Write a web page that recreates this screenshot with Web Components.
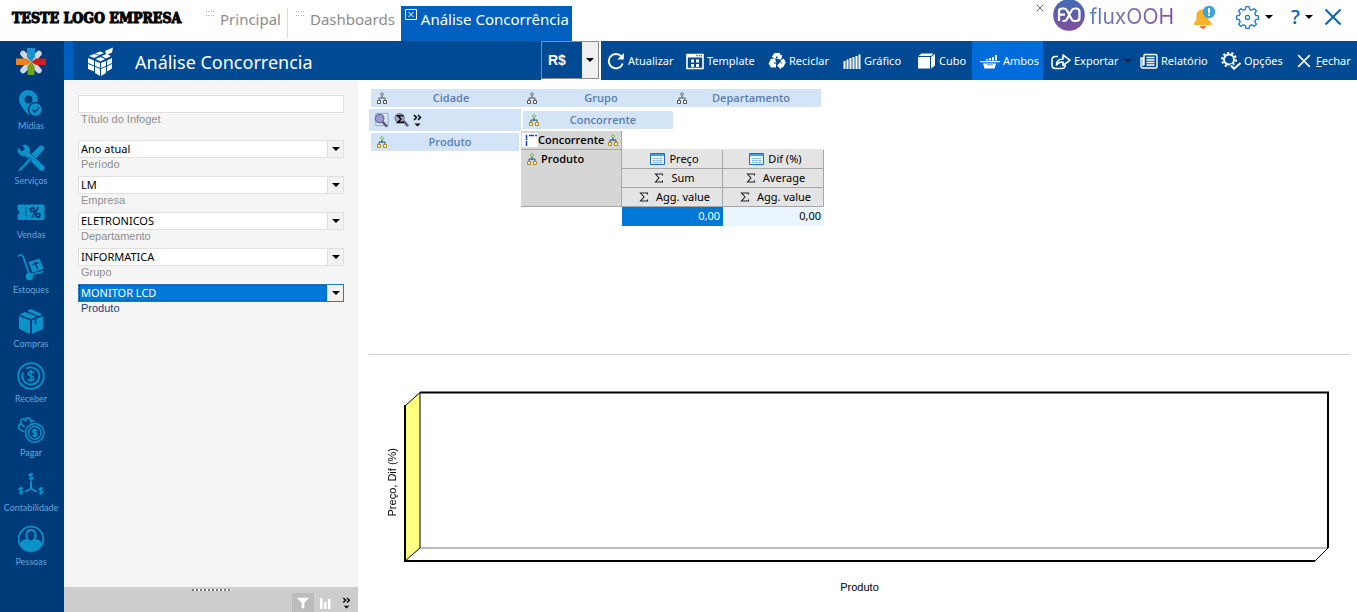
<!DOCTYPE html>
<html lang="pt-BR">
<head>
<meta charset="utf-8">
<title>Análise Concorrência</title>
<style>
html, body { margin: 0; height: 100%; }
body { font-family: "Noto Sans", "Open Sans", sans-serif; font-size: 11px; background: #fff; color: #000; }
</style>
</head>
<body>
<app-shell></app-shell>
<script>
const define = (name, html, setup) => {
  const template = document.createElement('template');
  template.innerHTML = html;
  customElements.define(name, class extends HTMLElement {
    connectedCallback() {
      if (this.shadowRoot) return;
      const root = this.attachShadow({ mode: 'open' });
      root.append(template.content.cloneNode(true));
      if (setup) setup(this, root);
    }
  });
};

const makeIcon = (name, className = '') => {
  const icon = document.createElement('ui-icon');
  icon.setAttribute('name', name);
  if (className) icon.className = className;
  return icon;
};

/* Icon set: [viewBox, markup]. Shapes use currentColor unless the icon is multicoloured. */
const ICONS = {
  grip: ['0 0 8 6', '<g fill="#b5b5b5"><path d="M0 0h1v1H0zM2 0h1v1H2zM5 0h1v1H5zM7 0h1v1H7zM0 4h1v1H0zM2 4h1v1H2zM5 4h1v1H5zM7 4h1v1H7z"/></g>'],
  tabclose: ['0 0 12 11', '<path d="M.5.5h11v10H.5z M3.5 3l5 5M8.500 3l-5 5" fill="none" stroke="currentColor"/>'],
  cross: ['0 0 18 18', '<path d="M1.500 1.500l15 15M16.500 1.500l-15 15" fill="none" stroke="currentColor" stroke-width="2"/>'],
  caret: ['0 0 8 4', '<path d="M0 0h8L4 4z" fill="currentColor"/>'],
  burst: ['0 0 30 30', '<g stroke="#cfd8e6" stroke-width="5.500" stroke-linecap="round"><path d="M15 15L7 6.500M15 15l8-8.500M15 15l-8 8.500M15 15l8 8.500"/></g><path d="M11 1h8v9l-4 5-4-5z" fill="#1c93d1"/><path d="M30 11.500v6.500h-10L15 15l5-3.500z" fill="#cc1f24"/><path d="M11.500 28h7v-9L15 15l-3.500 4z" fill="#6fa21a"/><path d="M0 11.500v6.500h11l4-3-4-3.500z" fill="#ee8421"/>'],
  cube: ['0 0 28 30', '<g fill="#fff"><path d="M1 11l6 2.500v5L1 16zM8 14l5 2v5l-5-2.300zM1 17l6 2.500v5L1 22zM8 19.700l5 2.300v7l-5-3z"/><path d="M25 11l-5 2.500v5l5-2.500zM19 14l-5 2v5l5-2.300zM25 17l-5 2.500v5l5-3zM19 19.700L14 22v7l5-3z"/><path d="M2 9l5-2 5 1.500-5 2.500zM8 6.500l5-2 4 1.500-4.500 2zM8.500 12l5-2 4.500 2-4.500 2.500zM14.500 9l5-2 4.500 2-5 2.500zM18 4l8-3.500-1 5L19.500 8z"/></g>'],
  refresh: ['0 0 18 18', '<path d="M15.800 11.500A7.200 7.200 0 1 1 14.500 4.500" fill="none" stroke="currentColor" stroke-width="1.900"/><path d="M16.800 1v6.500h-6.500z" fill="currentColor"/>'],
  template: ['0 0 18 18', '<path d="M1 2.500h16v14H1z" fill="none" stroke="currentColor" stroke-width="1.600"/><path d="M1 2h16v3.500H1z" fill="currentColor"/><path d="M10 3.200h1.500v1H10zM12.500 3.200H14v1h-1.500zM14.800 3.200H16v1h-1.200z" fill="#004a93"/><path d="M5 7.500h3v3H5zM10 7.500h3v3h-3zM5 12h3v3H5zM10 12h3v3h-3z" fill="currentColor"/>'],
  recycle: ['0 0 18 18', '<g fill="currentColor"><path d="M6.500 1h5L13 3.500l1.500-.8-1.500 5-4.800-1.200 1.600-.9L9 3.800 7.300 6.800 3.800 4.800z"/><path d="M2.500 7l4.500-.8 1.400 4.700-1.600-.9-1 1.500H8v4H3L.500 11.500l1.800-3z"/><path d="M12.500 8.500L15.800 6.500l2 4L15 15.500h-2.200V17.500L9 13.500l3.800-4v2H14z"/></g>'],
  bars: ['0 0 18 18', '<path d="M.5 9h2v8h-2zM3.500 7.500h2V17h-2zM6.500 6h2v11h-2zM9.500 5h2v12h-2zM12.500 4h2v13h-2zM15.500 2.500h2V17h-2z" fill="currentColor"/>'],
  box: ['0 0 18 18', '<path d="M0 5h12v11.500H0z M.5 4l3-2.500h12L13 4zM13 5l4-3v11.500L13 16.500z" fill="currentColor"/>'],
  both: ['0 0 20 18', '<path d="M0 9h20v1.200H0zM3 11.500h13L14.500 16.500h-10z M6 7h2v1.500H6zM9 6h2v2.500H9zM12 5h2v3.500h-2zM15 3h2v5.500h-2z" fill="currentColor"/><path d="M7 12.500h6v.8H7z" fill="#006bdb"/>'],
  share: ['0 0 20 18', '<path d="M7 4.500H4.500Q1 4.500 1 8v5q0 3.500 3.500 3.500H11q3 0 3.500-3.500M5.500 13Q5.500 7 12 7V3L19 8.200 12 13.500V10Q8 9.500 5.500 13z" fill="none" stroke="currentColor" stroke-width="1.600" stroke-linejoin="round"/>'],
  report: ['0 0 18 18', '<path d="M4 2.500h11.500q1.500 0 1.500 1.500v10.500q0 1.500-1.500 1.500H3Q1 16 1 14V6h2v8M4 2.500V13" fill="none" stroke="currentColor" stroke-width="1.400"/><path d="M6.500 5.500h8M6.500 8h8M6.500 10.500h8M6.500 13h8" stroke="currentColor" stroke-width="1.300"/>'],
  options: ['0 0 20 18', '<circle cx="8" cy="7.500" r="5" fill="none" stroke="currentColor" stroke-width="1.900"/><circle cx="8" cy="7.500" r="6.900" fill="none" stroke="currentColor" stroke-width="2.200" stroke-dasharray="2.200 2.135"/><path d="M9 13l3.500 3.500L19 10" fill="none" stroke="#004a93" stroke-width="4.500"/><path d="M10 13.500l3 3.200L19.500 11" fill="none" stroke="currentColor" stroke-width="2"/>'],
  fx: ['0 0 32 32', '<defs><linearGradient id="g" x1="0" x2="0" y1="0" y2="1"><stop offset="0" stop-color="#3f6cb4"/><stop offset="1" stop-color="#814e9f"/></linearGradient></defs><circle cx="16" cy="16" r="15.800" fill="url(#g)"/><g fill="none" stroke="#fff" stroke-width="2.200"><path d="M6 22V12.500q0-3 3-3h2q2 0 3 2l4.500 8.500q1 2 3 2H23q3.500 0 3.500-3.500V13q0-3.500-3.500-3.500h-1.500q-2 0-3 2L14 20q-1 2-3 2H9.500M6 15.700h6"/></g>'],
  bell: ['0 0 24 24', '<path d="M2 18.500l2.500-4V9Q6 4.500 10.500 4.500 16 5 16.500 10v4.500l3 4v1.500H2z" fill="#f6b22b"/><path d="M8 21h6q-.5 2.800-3 2.800T8 21z" fill="#e8722e"/><circle cx="17" cy="7" r="6.200" fill="#3da2de"/><path d="M16 3h2v5.200h-2zM16 9.200h2v1.900h-2z" fill="#fff"/>'],
  gear: ['0 0 24 24', '<path d="M10.500 1.500h3l.6 2.700 1.900.8 2.400-1.500 2.100 2.100L19 8l.8 1.900 2.700.6v3l-2.700.6L19 16l1.500 2.400-2.100 2.100L16 19l-1.900.8-.6 2.700h-3l-.6-2.700L8 19l-2.400 1.500-2.100-2.100L5 16l-.8-1.900-2.700-.6v-3l2.700-.6L5 8 3.500 5.600l2.100-2.100L8 5l1.900-.8z" fill="none" stroke="#1d78c8" stroke-width="1.300" stroke-linejoin="round"/><circle cx="12" cy="12" r="2" fill="none" stroke="#1d78c8" stroke-width="1.200"/>'],
  pin: ['0 0 28 28', '<path d="M11 1a9.500 9.500 0 0 1 9.700 9.500q0 2-1 4.200L11.500 26Q2 16 2 10.500A9 9 0 0 1 11 1z" fill="currentColor"/><circle cx="11.500" cy="10.500" r="4" fill="#003b79"/><circle cx="18.500" cy="20.500" r="7" fill="currentColor" stroke="#003b79" stroke-width="1.500"/><path d="M15.500 20.500l2.500 2.500 4-4.500" fill="none" stroke="#003b79" stroke-width="1.600"/>'],
  tools: ['0 0 28 28', '<g fill="currentColor"><path d="M1 4l4 3.500L8 5 5.500 1q5-1 7 3 .8 2-.2 4.500L27 22q1.500 2-.3 4t-4 0L9 12q-4 1-6.500-1.500T1 4z"/><path d="M26 1.500q2.500 1.500 1.500 4L19 15l-5-5 8.500-8.500q2-1.200 3.500 0z" stroke="#003b79"/><path d="M12.500 13.500l2.500 2L6 24.500l-.5 1.500-3.500 1.500-.8-.8L3 23l1.500-.5z" stroke="#003b79" stroke-width=".6"/></g>'],
  ticket: ['0 0 30 28', '<path d="M2 6h26q1.500 0 1.500 1.500V21q0 1.500-1.500 1.500H2Q.5 22.500.5 21v-4q2-.5 2-2.700T.500 11.500v-4Q.5 6 2 6z" fill="currentColor"/><path d="M9.500 9v11" stroke="#003b79" stroke-width="1.500" stroke-dasharray="2 1.500"/><g fill="none" stroke="#003b79" stroke-width="2"><circle cx="16.500" cy="11.500" r="2"/><circle cx="22.500" cy="17.500" r="2"/><path d="M23 9l-7 11"/></g>'],
  dolly: ['0 0 28 28', '<path d="M1 3.500Q4 .5 6 3.500l6.500 18.500L26.500 18.500" fill="none" stroke="currentColor" stroke-width="1.700"/><circle cx="12.500" cy="23.500" r="3.700" fill="currentColor"/><path d="M11.500 9L22.500 5.500l4 10.500-11 3.500z" fill="currentColor"/><path d="M20.500 16l-2-5.500M15.800 12.500l2.500-3 3.500 1" fill="none" stroke="#003b79" stroke-width="1.500"/>'],
  parcel: ['0 0 28 28', '<g fill="currentColor"><path d="M2 9l11 4.500V27L2 22zM26 9l-11 4.500V27l11-5z"/><path d="M2.500 7.500L8 5l11.500 4.500L14 12zM10 4l4-2 11.500 5.500L21.500 9z"/></g><path d="M18.500 12v5.500" stroke="#003b79" stroke-width="1.500"/>'],
  coin: ['0 0 28 28', '<g fill="none" stroke="currentColor"><circle cx="14" cy="14" r="12.800" stroke-width="1.800"/><path d="M9.500 6.700a8.500 8.500 0 1 1-3.500 4" stroke-width="1.800"/><path d="M17 11q-1-1.500-3-1.500-2.800 0-2.800 2.200 0 1.800 2.800 2.300t2.800 2.300q0 2.200-2.800 2.200-2.200 0-3.200-1.500M14 8v12" stroke-width="1.500"/></g>'],
  pay: ['0 0 30 28', '<g fill="none" stroke="currentColor" stroke-width="1.600"><circle cx="19" cy="17" r="10"/><circle cx="19" cy="17" r="6.800"/><path d="M21.500 14.700q-1-1-2.500-1-2.200 0-2.200 1.600 0 1.300 2.200 1.700t2.200 1.700q0 1.600-2.200 1.600-1.600 0-2.600-1M19 12.300v9.500"/><path d="M8 16Q1 13.500 1.500 10 2 7 5 8q-2.500-4 0-5.500t4.500 2Q8.500 1 11.500 1T15 5q2-2 3.500 0M5 8l3 3"/></g>'],
  ledger: ['0 0 28 28', '<g fill="none" stroke="currentColor" stroke-width="1.500"><path d="M14 10.500v7l-6 3.500M14 17.500l6 3.500" stroke-width="2"/><g id="d"><path d="M16 3.800q-.8-.9-2-.9-1.900 0-1.900 1.300 0 1 1.900 1.300t1.900 1.400q0 1.300-1.900 1.300-1.300 0-2.100-.9M14 2v8"/></g><use href="#d" x="-10" y="14"/><use href="#d" x="10" y="14"/></g>'],
  person: ['0 0 28 28', '<circle cx="14" cy="14" r="12.300" fill="none" stroke="currentColor" stroke-width="1.700"/><path d="M2.500 19Q5 14.500 9.500 14q-1.500-2-1-5Q9.500 4 14 4t5.500 5q.5 3-1 5 4.500.5 7 5-3.500 7-11.500 7T2.500 19z" fill="currentColor"/><path d="M10.500 8.500q0 7 3.500 7t3.500-7Q16 6 14 6t-3.500 2.500z" fill="#003b79"/>'],
  tree: ['0 0 10 12', '<path d="M5 3v3M2 8V6h6v2" fill="none" stroke="#555"/><path d="M5 .5L6.500 2 5 3.500 3.500 2zM.5 8.500h3v3h-3zM6.500 8.500h3v3h-3z" fill="#fff" stroke="#555"/>'],
  treecolor: ['0 0 10 12', '<path d="M5 4v3M2 8V6h6v2" fill="none" stroke="#23507c"/><path d="M5 .5L6.700 2.200 5 3.900 3.300 2.200z" fill="#d6f5cc" stroke="#4fb03d"/><path d="M.5 8.500h3v3h-3zM6.500 8.500h3v3h-3z" fill="#fff3b0" stroke="#b08b1c"/>'],
  find: ['0 0 18 16', '<path d="M3 1h13v13H3z" fill="#e8eefa" stroke="#8fa3c9"/><path d="M3 4h13M3 7h13M3 10h13M7 1v13M11 1v13" stroke="#b6c3de" stroke-width=".6"/><circle cx="7" cy="6.500" r="4.500" fill="#9a9bd0" stroke="#6a6795" stroke-width="1.300"/><path d="M10 10l5 5" stroke="#5c5a86" stroke-width="2.800"/>'],
  findsum: ['0 0 18 16', '<circle cx="7" cy="6" r="4.800" fill="#a9abc8" stroke="#77759b" stroke-width="1.300"/><path d="M11 9l5 5.500" stroke="#66648b" stroke-width="3"/><path d="M11 3.500H5l3.500 3.500L5 10.500h6.500" fill="none" stroke="#111" stroke-width="1.700"/>'],
  more: ['0 0 10 13', '<path d="M1 1l2.500 2.500L1 6M5 1l2.500 2.500L5 6" fill="none" stroke="#000" stroke-width="1.500"/><path d="M1.500 9.500h6L4.500 12.500z" fill="#000"/>'],
  pivotmark: ['0 0 16 14', '<path d="M0 0h16v14H0z" fill="#fff"/><path d="M4.500 13V2.500H6M7 2.500h8" fill="none" stroke="#1440c8" stroke-width="1.500" stroke-dasharray="5 1"/>'],
  sheet: ['0 0 15 12', '<path d="M.5.5h14v11H.5z" fill="#eaf4ff" stroke="#2569b7"/><path d="M1 1h13v2H1z" fill="#4c9be8"/><path d="M3 5.500h9M3 7.500h9M3 9.500h9" stroke="#7ab4ee" stroke-dasharray="2.500 .8"/>'],
  sigma: ['0 0 10 10', '<path d="M8.500 2.500V1H1.500L5 5 1.500 9h7V7.500" fill="none" stroke="#222" stroke-width="1.100"/>'],
  funnel: ['0 0 16 12', '<path d="M1 0h14L9.500 6v6h-3V6z" fill="#fff"/>'],
  minibars: ['0 0 12 12', '<path d="M1 1h2.500v11H1zM5 5h2.500v7H5zM9 2h2.500v10H9z" fill="#fff"/>']
};

customElements.define('ui-icon', class extends HTMLElement {
  connectedCallback() {
    if (this.shadowRoot) return;
    const [box, body] = ICONS[this.getAttribute('name')];
    this.attachShadow({ mode: 'open' }).innerHTML =
      `<style>:host{display:inline-block;flex:none;width:18px;height:18px}svg{display:block;width:100%;height:100%}</style>
       <svg viewBox="${box}" aria-hidden="true">${body}</svg>`;
  }
});

define('top-tab', `
<style>
:host { display: block; margin-top: 8px; height: 30px; }
:host([divided]) { border-left: 1px solid #dcdcdc; }
:host([active]) { margin-top: 6px; height: 35px; background: #0060bf; }
button { all: unset; box-sizing: border-box; display: flex; gap: 6px; height: 100%; padding: 0 6px 0 8px; color: #8c8c8c; font-size: 15px; line-height: 22px; cursor: pointer; white-space: nowrap; }
:host([active]) button { color: #fff; padding: 2px 3px 2px 4px; gap: 4px; }
ui-icon { width: 8px; height: 6px; margin-top: 3px; }
:host([active]) ui-icon { width: 12px; height: 11px; margin-top: 1px; }
</style>
<button type="button"><slot></slot></button>`,
(host, root) => root.querySelector('button').prepend(makeIcon(host.hasAttribute('active') ? 'tabclose' : 'grip')));

define('top-bar', `
<style>
:host { display: flex; height: 41px; background: #fff; }
.logo { width: 198px; box-sizing: border-box; padding-left: 12px; font: bold 14px/37px "DejaVu Serif Condensed", "DejaVu Serif", serif; font-stretch: condensed; -webkit-text-stroke: 1px #000; white-space: nowrap; }
nav { display: flex; flex: 1; }
.end { display: flex; align-items: center; height: 34px; padding-right: 15px; }
button { all: unset; display: flex; align-items: center; gap: 5px; cursor: pointer; color: #0a62b8; }
.tiny { align-self: flex-start; margin: 4px 9px 0 0; color: #555; }
.tiny ui-icon { width: 8px; height: 8px; }
.fx { width: 32px; height: 32px; margin: 0 5px 4px 0; }
.brand { font: 400 21px/30px Inter, sans-serif; background: linear-gradient(90deg, #5a7dbd, #7a68ae 50%, #8a4f9f); -webkit-background-clip: text; background-clip: text; color: transparent; margin-right: 18px; }
.bell { width: 24px; height: 24px; margin-right: 19px; }
.gear { width: 25px; height: 25px; }
.caret { width: 8px; height: 4px; color: #000; }
.help { font-size: 20px; line-height: 28px; font-weight: 500; margin: 0 11px 0 18px; }
</style>
<div class="logo">TESTE LOGO EMPRESA</div>
<nav><top-tab>Principal</top-tab><top-tab divided>Dashboards</top-tab><top-tab active>Análise Concorrência</top-tab></nav>
<div class="end">
<button class="tiny" type="button" aria-label="Ocultar"><ui-icon name="cross"></ui-icon></button>
<ui-icon class="fx" name="fx"></ui-icon><span class="brand">fluxOOH</span>
<ui-icon class="bell" name="bell"></ui-icon>
<button type="button" aria-label="Configurações"><ui-icon class="gear" name="gear"></ui-icon><ui-icon class="caret" name="caret"></ui-icon></button>
<button class="help" type="button">?<ui-icon class="caret" name="caret"></ui-icon></button>
<button type="button" aria-label="Sair"><ui-icon name="cross"></ui-icon></button>
</div>`);

define('rail-item', `
<style>
:host { display: block; color: #0b92c8; }
a { display: flex; flex-direction: column; align-items: center; text-decoration: none; color: inherit; }
ui-icon { width: 28px; height: 28px; }
span { color: #65a5dc; font: 9px/14px Lato, sans-serif; margin-top: 2px; white-space: nowrap; }
</style>
<a href="#"><span><slot></slot></span></a>`,
(host, root) => root.querySelector('a').prepend(makeIcon(host.getAttribute('icon'))));

define('side-rail', `
<style>
:host { display: flex; flex-direction: column; width: 64px; flex: none; background: #003b79; }
.mark { width: 30px; height: 30px; margin: 6px 0 12px 16px; }
nav { flex: 1; display: grid; grid-auto-rows: minmax(50px, 1fr); width: 62px; padding-bottom: 32px; }
</style>
<ui-icon class="mark" name="burst"></ui-icon>
<nav>
<rail-item icon="pin">Mídias</rail-item><rail-item icon="tools">Serviços</rail-item><rail-item icon="ticket">Vendas</rail-item>
<rail-item icon="dolly">Estoques</rail-item><rail-item icon="parcel">Compras</rail-item><rail-item icon="coin">Receber</rail-item>
<rail-item icon="pay">Pagar</rail-item><rail-item icon="ledger">Contabilidade</rail-item><rail-item icon="person">Pessoas</rail-item>
</nav>`);

define('tool-button', `
<style>
:host { display: block; color: #fff; }
:host([active]) { background: #006bdb; }
button { all: unset; box-sizing: border-box; width: 100%; height: 100%; display: flex; align-items: center; gap: 3px; padding-left: 6px; cursor: pointer; white-space: nowrap; }
:host([wide]) button { padding-left: 8px; }
:host([wide]) .main { width: 20px; }
:host([small]) button { padding-left: 7px; gap: 5px; }
:host([small]) .main { width: 14px; height: 14px; }
.caret { width: 8px; height: 4px; margin-left: 2px; color: #001d40; }
</style>
<button type="button"><span><slot></slot></span></button>`,
(host, root) => {
  const button = root.querySelector('button');
  button.prepend(makeIcon(host.getAttribute('icon'), 'main'));
  if (host.hasAttribute('menu')) button.append(makeIcon('caret', 'caret'));
});

define('tool-bar', `
<style>
:host { display: flex; height: 39px; background: #004a93; color: #fff; border-left: 9px solid #0060bf; box-sizing: border-box; }
.cube { width: 28px; height: 30px; margin: 6px 20px 0 14px; }
h1 { flex: 1; margin: 0; font-size: 18px; font-weight: 400; line-height: 42px; white-space: nowrap; }
.currency { display: grid; width: 60px; background: #fff; }
.frame { grid-area: 1/1; display: grid; box-sizing: border-box; width: 58px; height: 38px; border: 1px solid #8b8b8b; }
select { grid-area: 1/1; appearance: none; border: 0; border-radius: 0; margin: 0; padding: 0 6px; background: #004a93; color: #fff; font: bold 14px/20px "Liberation Sans", sans-serif; }
.arrow { grid-area: 1/1; justify-self: end; width: 16px; display: grid; place-items: center; background: #f0f0f0; color: #000; pointer-events: none; }
.arrow ui-icon { width: 8px; height: 4px; }
.tools { display: grid; grid-template-columns: 79px 82px 75px 75px 60px 71px 91px 79px 77px 67px; }
</style>
<ui-icon class="cube" name="cube"></ui-icon>
<h1>Análise Concorrencia</h1>
<div class="currency"><div class="frame"><select aria-label="Moeda"><option>R$</option></select><span class="arrow"><ui-icon name="caret"></ui-icon></span></div></div>
<div class="tools">
<tool-button icon="refresh">Atualizar</tool-button><tool-button icon="template">Template</tool-button><tool-button icon="recycle">Reciclar</tool-button>
<tool-button icon="bars">Gráfico</tool-button><tool-button icon="box">Cubo</tool-button><tool-button icon="both" wide active>Ambos</tool-button>
<tool-button icon="share" wide menu>Exportar</tool-button><tool-button icon="report">Relatório</tool-button><tool-button icon="options" wide>Opções</tool-button>
<tool-button icon="cross" small><u>F</u>echar</tool-button>
</div>`);

define('filter-field', `
<style>
:host { display: block; height: 36px; }
.box { display: grid; box-sizing: border-box; height: 18px; background: #fff; border: 1px solid #e0e0e0; }
input, select { grid-area: 1/1; box-sizing: border-box; width: 100%; min-width: 0; height: 16px; appearance: none; border: 0; border-radius: 0; margin: 0; padding: 0 2px; background: transparent; font: 11px/16px "Noto Sans", sans-serif; color: #000; outline: none; }
.arrow { grid-area: 1/1; justify-self: end; width: 15px; display: grid; place-items: center; background: #f2f2f2; border-left: 1px solid #dcdcdc; pointer-events: none; }
.arrow ui-icon { width: 8px; height: 4px; }
label { display: block; padding-left: 3px; font: 11px/12px "Liberation Sans", sans-serif; color: #8e8e8e; }
:host([focused]) .box { border-color: #2a78c4; }
:host([focused]) select { background: #0078d7; color: #fff; outline: 1px dotted #222; outline-offset: -1px; width: calc(100% - 15px); }
:host([focused]) label { color: #123f7f; }
</style>
<div class="box"></div><label for="control"></label>`,
(host, root) => {
  const value = host.getAttribute('value');
  root.querySelector('.box').innerHTML = value === null
    ? '<input id="control" type="text">'
    : `<select id="control"><option>${value}</option></select><span class="arrow"><ui-icon name="caret"></ui-icon></span>`;
  root.querySelector('label').textContent = host.getAttribute('label');
});

define('filter-panel', `
<style>
:host { display: flex; flex-direction: column; width: 294px; flex: none; background: #f5f5f5; }
form { flex: 1; padding: 15px 14px 0; }
.title { margin-bottom: 9px; }
footer { display: flex; flex-direction: column; height: 25px; background: #cdcdcd; }
.grip { width: 39px; height: 2px; margin: 2px auto; background: repeating-linear-gradient(90deg, #777 0 2px, #fff 2px 4px); }
.row { display: flex; justify-content: flex-end; }
button { all: unset; display: grid; place-items: center; width: 22px; height: 19px; cursor: pointer; }
button.on { background: #bcbcbc; }
ui-icon { width: 14px; height: 12px; }
</style>
<form>
<filter-field class="title" label="Título do Infoget"></filter-field>
<filter-field label="Período" value="Ano atual"></filter-field>
<filter-field label="Empresa" value="LM"></filter-field>
<filter-field label="Departamento" value="ELETRONICOS"></filter-field>
<filter-field label="Grupo" value="INFORMATICA"></filter-field>
<filter-field label="Produto" value="MONITOR LCD" focused></filter-field>
</form>
<footer><div class="grip"></div><div class="row">
<button class="on" type="button" aria-label="Filtros"><ui-icon name="funnel"></ui-icon></button>
<button type="button" aria-label="Gráficos"><ui-icon name="minibars"></ui-icon></button>
<button type="button" aria-label="Mais"><ui-icon name="more"></ui-icon></button>
</div></footer>`);

define('dimension-chip', `
<style>
:host { display: flex; align-items: center; box-sizing: border-box; width: 150px; height: 18px; padding: 0 6px; background: #d3e4f6; color: #5a7db0; font: 600 11px/18px "Open Sans", "Noto Sans", sans-serif; }
ui-icon { width: 10px; height: 12px; }
span { flex: 1; text-align: center; }
</style>
<span><slot></slot></span>`,
(host, root) => root.querySelector('span').before(makeIcon(host.hasAttribute('used') ? 'treecolor' : 'tree')));

define('pivot-grid', `
<style>
:host { display: block; padding: 9px 0 0 11px; }
.filters { display: flex; padding-left: 2px; }
.area { display: grid; grid-template-columns: 152px 1fr; justify-items: start; }
.tools { display: flex; align-items: center; gap: 3px; width: 100%; height: 22px; margin-top: 2px; background: #d3e4f6; padding-left: 4px; box-sizing: border-box; }
.tools button { all: unset; display: flex; cursor: pointer; }
.tools ui-icon { width: 17px; height: 16px; }
.tools .more { width: 10px; height: 13px; }
.columns { padding: 4px 0 2px 2px; }
.rows { padding: 2px 0 0 2px; }
.rows dimension-chip { width: 148px; }
table { border-collapse: separate; border-spacing: 0; table-layout: fixed; width: 303px; }
th, td { box-sizing: border-box; height: 19px; padding: 0; line-height: 18px; border: solid #a6a6a6; border-width: 0 1px 1px 0; }
th { background: #e4e4e4; font-weight: 400; }
th.dim { background: #d6d6d6; font-weight: 600; font-family: "Open Sans", "Noto Sans", sans-serif; vertical-align: top; text-align: left; }
.flow { display: flex; align-items: center; justify-content: center; gap: 4px; height: 18px; padding-left: 5px; }
.flow.agg { gap: 7px; }
.dim .flow { justify-content: flex-start; padding-left: 6px; }
.dim .head { padding-left: 1px; gap: 0; }
.flow ui-icon { width: 10px; height: 12px; }
.flow .sheet { width: 15px; }
.flow .mark { width: 16px; height: 14px; }
.head .last { margin-left: 4px; }
td { text-align: right; padding-right: 2px; background: #eaf5fe; border-color: #eaf5fe; }
td.on { background: #0078d7; border-color: #0078d7; color: #fff; }
td.none, th.none { background: none; border-color: transparent; }
th.none { border-bottom-color: #e4e4e4; }
</style>
<div class="filters"><dimension-chip>Cidade</dimension-chip><dimension-chip>Grupo</dimension-chip><dimension-chip>Departamento</dimension-chip></div>
<div class="area">
<div class="tools"><button type="button" aria-label="Localizar"><ui-icon name="find"></ui-icon></button><button type="button" aria-label="Totais"><ui-icon name="findsum"></ui-icon></button><button type="button" aria-label="Mais"><ui-icon class="more" name="more"></ui-icon></button></div>
<div class="columns"><dimension-chip used>Concorrente</dimension-chip></div>
<div class="rows"><dimension-chip used>Produto</dimension-chip></div>
<table>
<tr><th class="dim" scope="col"><div class="flow head"><ui-icon class="mark" name="pivotmark"></ui-icon>Concorrente<ui-icon class="last" name="treecolor"></ui-icon></div></th><th class="none"></th><th class="none"></th></tr>
<tr><th class="dim" scope="col" rowspan="3"><div class="flow"><ui-icon name="treecolor"></ui-icon>Produto</div></th>
<th scope="col"><div class="flow"><ui-icon class="sheet" name="sheet"></ui-icon>Preço</div></th><th scope="col"><div class="flow"><ui-icon class="sheet" name="sheet"></ui-icon>Dif (%)</div></th></tr>
<tr><th><div class="flow agg"><ui-icon name="sigma"></ui-icon>Sum</div></th><th><div class="flow agg"><ui-icon name="sigma"></ui-icon>Average</div></th></tr>
<tr><th><div class="flow agg"><ui-icon name="sigma"></ui-icon>Agg. value</div></th><th><div class="flow agg"><ui-icon name="sigma"></ui-icon>Agg. value</div></th></tr>
<tr><td class="none"></td><td class="on">0,00</td><td>0,00</td></tr>
</table>
</div>`);

define('chart-panel', `
<style>
:host { display: grid; grid-template: 1fr 51px / 34px 1fr; margin: 0 7px 0 11px; padding-top: 36px; height: 258px; flex: none; box-sizing: border-box; border-top: 1px solid #cfcfcf; font: 11px/14px "Liberation Sans", sans-serif; }
.y { writing-mode: vertical-rl; transform: rotate(180deg); place-self: center; margin: 12px 0 0 12px; white-space: nowrap; }
.plot { margin-right: 21px; min-width: 0; }
svg { display: block; width: 100%; height: 100%; overflow: visible; }
svg * { vector-effect: non-scaling-stroke; }
.x { grid-column: 1 / 3; text-align: center; padding-top: 18px; }
</style>
<div class="y">Preço, Dif (%)</div>
<div class="plot">
<svg viewBox="0 0 926 171" preserveAspectRatio="none" aria-hidden="true">
<path d="M2 15L17 1.500V157L2 170z" fill="#ffff80" stroke="#000"/>
<path d="M17 157H925" stroke="#777" fill="none"/>
<path d="M925 157L912 170" stroke="#000" fill="none"/>
<path d="M17 1.500H925V157M912 170H2V14" stroke="#000" stroke-width="2" fill="none"/>
</svg>
</div>
<div class="x">Produto</div>`);

define('app-shell', `
<style>
:host { display: flex; flex-direction: column; min-height: 100vh; }
.body { flex: 1; display: flex; }
.work { flex: 1; display: flex; flex-direction: column; min-width: 0; }
.content { flex: 1; display: flex; }
main { flex: 1; display: flex; flex-direction: column; min-width: 0; }
pivot-grid { flex: 1; }
</style>
<top-bar></top-bar>
<div class="body"><side-rail></side-rail>
<div class="work"><tool-bar></tool-bar>
<div class="content"><filter-panel></filter-panel><main><pivot-grid></pivot-grid><chart-panel></chart-panel></main></div>
</div></div>`);
</script>
</body>
</html>
